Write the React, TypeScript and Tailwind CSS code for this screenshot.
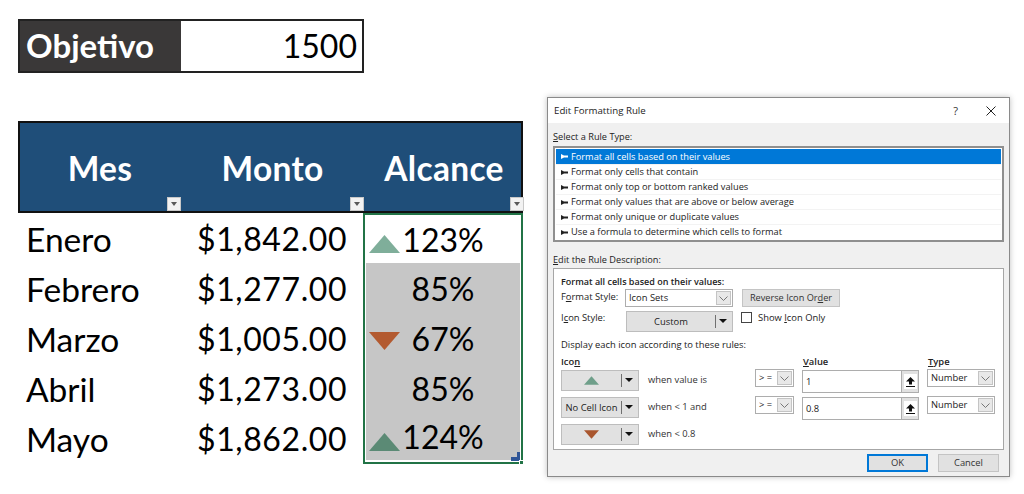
const months = [
  {name: 'Enero', amount: '1,842.00', pct: '123%', icon: 'up', shade: false},
  {name: 'Febrero', amount: '1,277.00', pct: '85%', icon: null, shade: true},
  {name: 'Marzo', amount: '1,005.00', pct: '67%', icon: 'down', shade: true},
  {name: 'Abril', amount: '1,273.00', pct: '85%', icon: null, shade: true},
  {name: 'Mayo', amount: '1,862.00', pct: '124%', icon: 'up', shade: true},
];

const rules = [
  'Format all cells based on their values',
  'Format only cells that contain',
  'Format only top or bottom ranked values',
  'Format only values that are above or below average',
  'Format only unique or duplicate values',
  'Use a formula to determine which cells to format',
];

function Triangle({dir, className, color}: {dir: 'up' | 'down'; className: string; color: string}) {
  return (
    <svg className={className} viewBox="0 0 31 18">
      <path d={dir === 'up' ? 'M15.5 0 L31 18 L0 18 Z' : 'M0 0 L31 0 L15.5 18 Z'} fill={color} />
    </svg>
  );
}

function FilterButton() {
  return (
    <span className="absolute bottom-0 right-px flex h-[14px] w-[14px] items-center justify-center border border-[#c8c8c8] bg-[#f2f2f2]">
      <svg className="h-[4px] w-[6px]" viewBox="0 0 6 4">
        <path d="M0 0 L6 0 L3 4 Z" fill="#595959" />
      </svg>
    </span>
  );
}

function Chevron() {
  return (
    <span className="flex h-full w-[15px] items-center justify-center border border-[#c4c4c4] bg-[#e8e8e8]">
      <svg className="h-[5px] w-[9px]" viewBox="0 0 9 5" fill="none" stroke="#777" strokeWidth="1">
        <path d="M0.5 0.5 L4.5 4.5 L8.5 0.5" />
      </svg>
    </span>
  );
}

function SelectBox({value, className}: {value: string; className: string}) {
  return (
    <div className={`flex items-center justify-between border border-[#adadad] bg-white pl-[3px] pr-px py-px ${className}`}>
      <span className="leading-none">{value}</span>
      <Chevron />
    </div>
  );
}

function SplitButton({children, className}: {children: React.ReactNode; className: string}) {
  return (
    <div className={`flex items-center border border-[#bdbdbd] bg-[#e1e1e1] ${className}`}>
      <div className="flex flex-1 items-center justify-center">{children}</div>
      <div className="flex h-[70%] w-[14px] items-center justify-center border-l border-[#707070]">
        <svg className="h-[4px] w-[8px]" viewBox="0 0 8 4">
          <path d="M0 0 L8 0 L4 4 Z" fill="#111" />
        </svg>
      </div>
      <div className="w-[3px]" />
    </div>
  );
}

function ValueInput({value}: {value: string}) {
  return (
    <div className="flex h-[23px] w-[117px] items-center justify-between border border-[#adadad] bg-white pl-[3px]">
      <span>{value}</span>
      <span className="flex h-full w-[17px] items-center justify-center border-l border-[#adadad] bg-[#e1e1e1]">
        <span className="flex h-[15px] w-[13px] items-center justify-center bg-white">
          <svg className="h-[10px] w-[9px]" viewBox="0 0 9 10">
            <path d="M4.5 0 L9 4.5 L6 4.5 L6 7.5 L3 7.5 L3 4.5 L0 4.5 Z M0 9 L9 9 L9 10 L0 10 Z" fill="#111" />
          </svg>
        </span>
      </span>
    </div>
  );
}

function RuleRow({icon, label, op, value, rowClass}: {icon: React.ReactNode; label: string; op?: string; value?: string; rowClass: string}) {
  return (
    <div className={`flex items-start ${rowClass}`}>
      <SplitButton className="h-[21px] w-[78px]">{icon}</SplitButton>
      <span className="ml-[9px] mt-[3px] w-[107px] text-[#333]">{label}</span>
      {op && value && (
        <>
          <SelectBox value={op} className="-mt-px h-[18px] w-[39px]" />
          <div className="ml-[8px]">
            <ValueInput value={value} />
          </div>
          <SelectBox value="Number" className="-mt-px ml-[8px] h-[18px] w-[68px]" />
        </>
      )}
    </div>
  );
}

function EditRuleDialog() {
  return (
    <div className="mt-[97px] flex h-[380px] w-[463px] flex-col border border-[#8a8a8a] bg-[#f0f0f0] font-['Open_Sans',sans-serif] text-[9.4px] leading-[14px] text-[#222] shadow-[0_0_6px_rgba(0,0,0,0.25)]">
      <div className="flex h-[25px] items-center justify-between bg-white pl-[6px] pr-[13px] text-[9.7px]">
        <span>Edit Formatting Rule</span>
        <div className="flex items-center gap-[28px] text-[#333]">
          <span className="text-[11px]">?</span>
          <svg className="h-[10px] w-[10px]" viewBox="0 0 10 10" stroke="#222" strokeWidth="1">
            <path d="M0.5 0.5 L9.5 9.5 M9.5 0.5 L0.5 9.5" />
          </svg>
        </div>
      </div>

      <div className="flex flex-1 flex-col px-[5px]">
        <p className="mt-[7px] text-[9.2px]">
          <span className="underline">S</span>elect a Rule Type:
        </p>
        <ul className="mt-[2px] h-[96px] border-2 border-[#8f8f8f] bg-white p-px text-[9.25px]">
          {rules.map((rule, i) => (
            <li
              key={rule}
              className={`flex h-[15px] items-center pl-[5px] ${i === 0 ? 'bg-[#0078d7] text-white' : 'border-t border-[#f3f3f3]'}`}
            >
              <svg className="mr-[3px] h-[5px] w-[7px]" viewBox="0 0 7 5">
                <path d="M0 0 L3 1.5 L7 1.5 L7 3.5 L3 3.5 L0 5 Z" fill={i === 0 ? '#fff' : '#222'} />
              </svg>
              {rule}
            </li>
          ))}
        </ul>

        <p className="mt-[11px] text-[9.2px]">
          <span className="underline">E</span>dit the Rule Description:
        </p>
        <div className="mt-px h-[182px] border border-[#a6a6a6] bg-white pl-[7px] pt-[6px]">
          <p className="text-[9px] font-semibold">Format all cells based on their values:</p>
          <div className="flex h-[19px] items-start">
            <span className="mt-[1px] w-[64px]">
              F<span className="underline">o</span>rmat Style:
            </span>
            <SelectBox value="Icon Sets" className="h-[18px] w-[108px]" />
            <button className="ml-[9px] flex h-[18px] w-[98px] items-center justify-center border border-[#c4c4c4] bg-[#e1e1e1] text-[9.2px] text-[#333]">
              <span>
                Reverse Icon Or<span className="underline">d</span>er
              </span>
            </button>
          </div>
          <div className="mt-[3px] flex h-[21px] items-start">
            <span className="w-[65px]">
              I<span className="underline">c</span>on Style:
            </span>
            <SplitButton className="h-[21px] w-[107px]">Custom</SplitButton>
            <span className="ml-[8px] mt-px h-[11px] w-[11px] border border-[#444] bg-white" />
            <span className="ml-[6px]">
              Show <span className="underline">I</span>con Only
            </span>
          </div>
          <p className="mt-[6px]">Display each icon according to these rules:</p>
          <div className="mt-[3px] flex h-[14px] font-semibold">
            <span className="w-[242px]">
              Ico<span className="underline">n</span>
            </span>
            <span className="w-[125px]">
              <span className="underline">V</span>alue
            </span>
            <span>
              <span className="underline">T</span>ype
            </span>
          </div>
          <RuleRow
            rowClass="mt-[1px]"
            icon={<Triangle dir="up" className="h-[9px] w-[15px]" color="#6f9f8a" />}
            label="when value is"
            op="> ="
            value="1"
          />
          <RuleRow rowClass="mt-[4px]" icon="No Cell Icon" label="when < 1 and" op="> =" value="0.8" />
          <RuleRow
            rowClass="mt-[4px]"
            icon={<Triangle dir="down" className="h-[9px] w-[15px]" color="#a9562e" />}
            label="when < 0.8"
          />
        </div>
        <div className="mt-[4px] flex justify-end gap-[10px] pr-[5px]">
          <button className="h-[18px] w-[61px] border-2 border-[#0078d7] bg-[#e1e1e1] text-[#333]">OK</button>
          <button className="h-[18px] w-[61px] border border-[#c4c4c4] bg-[#e1e1e1] text-[#333]">Cancel</button>
        </div>
      </div>
    </div>
  );
}

export default function App() {
  return (
    <div className="flex h-[494px] w-[1024px] overflow-hidden bg-white font-['Lato',sans-serif] text-black">
      <div className="w-[547px] shrink-0 pl-[18px] pt-[19px]">
        <div className="flex h-[54px] w-[346px] border-2 border-[#222] text-[32px]">
          <div className="flex w-[161px] items-center bg-[#3a3838] pl-[6px] text-[33px] font-bold text-white">Objetivo</div>
          <div className="flex flex-1 items-center justify-end pr-[5px]">1500</div>
        </div>

        <div className="mt-[48px] w-[505px]">
          <div className="grid h-[92px] grid-cols-[162px_183px_160px] border-2 border-[#111] bg-[#1f4e79] text-[33.5px] font-bold tracking-[0.3px] text-white">
            {['Mes', 'Monto', 'Alcance'].map((title) => (
              <div key={title} className="relative flex items-center justify-center pr-[2px] pt-[3px]">
                {title}
                <FilterButton />
              </div>
            ))}
          </div>

          <div className="relative grid grid-cols-[162px_183px_160px] pt-px text-[32px]">
            <div className="text-[33.5px]">
              {months.map((m) => (
                <div key={m.name} className="flex h-[50px] items-center pl-[8px]">
                  {m.name}
                </div>
              ))}
            </div>
            <div className="tracking-[0.6px]">
              {months.map((m) => (
                <div key={m.name} className="flex h-[50px] items-center justify-between pl-[17px] pr-[18px]">
                  <span>$</span>
                  <span>{m.amount}</span>
                </div>
              ))}
            </div>
            <div className="relative -mt-px border-2 border-[#217346]">
              {months.map((m, i) => (
                <div
                  key={m.name}
                  className={`relative flex items-center justify-center border-x border-white pt-px ${i === 0 || i === 4 ? 'h-[48px]' : 'h-[50px]'} ${i === 4 ? 'border-b' : ''} ${m.shade ? 'bg-[#c6c6c6]' : 'bg-white'}`}
                >
                  {m.icon && (
                    <Triangle
                      dir={m.icon as 'up' | 'down'}
                      className={`absolute left-[3px] h-[18px] w-[31px] ${i === 2 ? 'top-[19px]' : 'top-[20px]'}`}
                      color={m.icon === 'down' ? '#b35a30' : i === 0 ? '#7fae9a' : '#5b8a75'}
                    />
                  )}
                  {m.pct}
                </div>
              ))}
              <svg className="absolute bottom-[1px] right-[1px] h-[9px] w-[9px]" viewBox="0 0 9 9">
                <path d="M6 0 L9 0 L9 9 L0 9 L0 5 L6 5 Z" fill="#2f5597" />
              </svg>
              <span className="absolute bottom-[-3px] right-[-3px] h-[5px] w-[5px] border border-white bg-[#217346]" />
            </div>
          </div>
        </div>
      </div>

      <EditRuleDialog />
    </div>
  );
}
